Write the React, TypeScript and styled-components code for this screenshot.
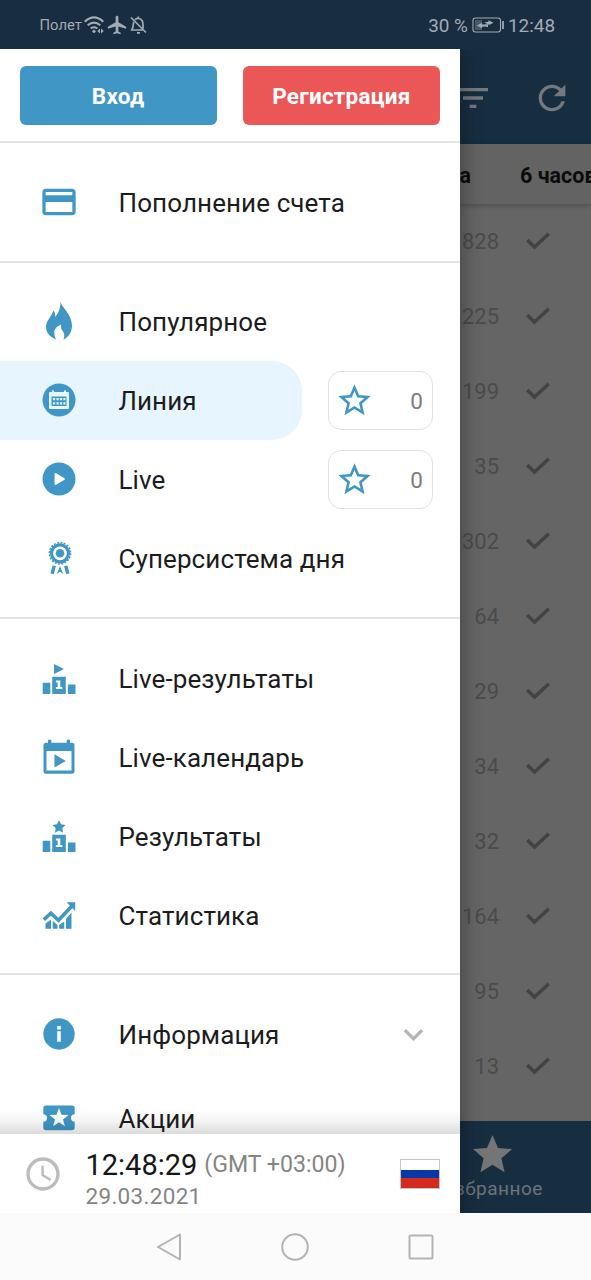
import React from "react";
import styled, { createGlobalStyle } from "styled-components";
import {
  MdAccessTime,
  MdAirplanemodeActive,
  MdCreditCard,
  MdExpandMore,
  MdFilterList,
  MdRefresh,
  MdStar,
  MdStarBorder,
} from "react-icons/md";

const BLUE = "#4097c5";

const GlobalStyle = createGlobalStyle`
  * { box-sizing: border-box; }
  body { margin: 0; background: #fbfbfb; font-family: Roboto, "Liberation Sans", sans-serif; }
  svg { display: block; flex-shrink: 0; }
  button { font-family: inherit; border: 0; padding: 0; }
`;

const Screen = styled.div`
  display: flex;
  flex-direction: column;
  width: 591px;
  height: 1280px;
  overflow: hidden;
`;

const StatusBar = styled.header`
  display: flex;
  justify-content: space-between;
  align-items: center;
  height: 49px;
  flex-shrink: 0;
  padding: 1px 36px 0 39.5px;
  background: #182d41;
  color: #a3abb3;
`;

const StatusGroup = styled.div<{ $size: number; $gap: number }>`
  display: flex;
  align-items: center;
  gap: ${(p) => p.$gap}px;
  font-size: ${(p) => p.$size}px;
  white-space: nowrap;
`;

const Body = styled.div`
  display: flex;
  height: 1164px;
  flex-shrink: 0;
`;

const Drawer = styled.aside`
  z-index: 1;
  display: flex;
  flex-direction: column;
  width: 459.5px;
  flex-shrink: 0;
  background: #fff;
  box-shadow: 3px 0 18px rgba(0, 0, 0, 0.32);
  clip-path: inset(0 -30px 0 0);
`;

const AuthRow = styled.div`
  display: flex;
  gap: 26px;
  height: 94px;
  flex-shrink: 0;
  padding: 17px 19.5px 0;
  border-bottom: 2px solid #e4e4e4;
`;

const AuthButton = styled.button<{ $color: string }>`
  flex: 1;
  height: 59px;
  border-radius: 6px;
  background: ${(p) => p.$color};
  color: #fff;
  font-size: 22.5px;
  font-weight: 700;
  letter-spacing: 0.25px;
  line-height: 60px;
`;

const Menu = styled.nav`
  height: 991px;
  overflow: hidden;
  flex-shrink: 0;
`;

const Section = styled.section`
  padding: 20px 0 18px;
  border-bottom: 2px solid #e4e4e4;
  &:first-child { padding-bottom: 19px; }
  &:nth-child(2) { padding: 19px 0; }
  &:last-child { border-bottom: 0; }
`;

const Item = styled.div<{ $height?: number }>`
  display: flex;
  align-items: center;
  height: ${(p) => p.$height ?? 79}px;
`;

const ItemMain = styled.div<{ $active?: boolean }>`
  display: flex;
  align-items: center;
  width: 302px;
  height: 79px;
  flex-shrink: 0;
  padding: 0 0 1px 39px;
  border-radius: 0 30px 30px 0;
  background: ${(p) => (p.$active ? "#e6f5ff" : "transparent")};
  color: ${BLUE};
`;

const Label = styled.span`
  margin-left: 39.5px;
  padding-top: 2px;
  color: #1c1c1e;
  font-size: 26px;
  letter-spacing: 0.1px;
  line-height: 32px;
  white-space: nowrap;
`;

const FavoriteBox = styled.div`
  display: flex;
  justify-content: space-between;
  align-items: center;
  width: 105px;
  height: 59px;
  margin-left: 26px;
  padding: 0 9px 0 6px;
  border: 1.5px solid #e0e0e0;
  border-radius: 13px;
  color: #7c7c7c;
  font-size: 22.5px;
  svg { color: ${BLUE}; }
`;

const Chevron = styled(MdExpandMore)`
  margin-left: 92px;
  color: #b5b5b5;
`;

const MenuShade = styled.div`
  position: relative;
  height: 24px;
  margin-top: -24px;
  flex-shrink: 0;
  background: linear-gradient(to bottom, rgba(0, 0, 0, 0), rgba(0, 0, 0, 0.05) 50%, rgba(0, 0, 0, 0.14));
`;

const Footer = styled.footer`
  display: flex;
  height: 79px;
  flex-shrink: 0;
  padding: 0 20px 0 22.5px;
  background: #fff;
  svg:first-child { margin-top: 20px; color: #bcbcbc; }
`;

const Clock = styled.div`
  flex: 1;
  margin-left: 23px;
  padding-top: 12px;
  color: #858585;
  font-size: 22.5px;
  white-space: nowrap;
`;

const Time = styled.div`
  display: flex;
  align-items: center;
  gap: 7px;
  height: 37px;
  line-height: 36px;
  font-size: 23.1px;
  strong { color: #161616; font-size: 29px; font-weight: 400; }
`;

const DateLine = styled.div`
  line-height: 26px;
  letter-spacing: 0.3px;
`;

const Flag = styled.div`
  width: 40px;
  height: 30px;
  margin-top: 25px;
  border: 1.5px solid #c4c4c4;
  background: linear-gradient(#fff 0 34%, #0638a8 34% 66%, #d52a1e 66%);
`;

const Page = styled.main`
  display: flex;
  flex-direction: column;
  flex: 1;
  min-width: 0;
  overflow: hidden;
  background: #656565;
`;

const AppBar = styled.div`
  display: flex;
  gap: 39px;
  height: 95px;
  flex-shrink: 0;
  background: #172e41;
  color: #74797d;
  svg { margin-top: 29px; }
  svg:first-child { margin-left: -7px; }
`;

const Tabs = styled.div`
  display: flex;
  gap: 49px;
  height: 60px;
  flex-shrink: 0;
  background: #636363;
  box-shadow: 0 2px 5px rgba(0, 0, 0, 0.22);
  color: #0c0c0c;
  font-size: 21.5px;
  font-weight: 700;
  line-height: 63px;
  white-space: nowrap;
`;

const List = styled.div`
  flex: 1;
  min-height: 0;
`;

const CountRow = styled.div`
  display: flex;
  align-items: center;
  justify-content: flex-end;
  gap: 27px;
  height: 75px;
  padding-right: 41px;
  color: #4b4b4b;
  font-size: 22px;
  svg { margin-bottom: 1px; }
`;

const BottomFill = styled.div`
  background: #172e41;
`;

const BottomTab = styled.div`
  display: flex;
  flex-direction: column;
  align-items: center;
  width: 65px;
  height: 92px;
  padding-top: 10px;
  color: #6d747a;
  font-size: 19px;
  letter-spacing: 0.5px;
  line-height: 22px;
  white-space: nowrap;
  svg { color: #757575; }
`;

const NavBar = styled.div`
  display: flex;
  align-items: center;
  justify-content: center;
  gap: 98px;
  flex: 1;
  padding-right: 2px;
  background: #fbfbfb;
`;

const Icon = ({ children, size = 40 }: { children: React.ReactNode; size?: number }) => (
  <svg width={size} height={size} viewBox="0 0 40 40" fill="currentColor">
    {children}
  </svg>
);

const FlameIcon = () => (
  <Icon>
    <path d="M21.6 0.5c.5 5.500 11.400 12.500 11.400 24.200 0 7-4.200 11.700-8.500 14.100 1.200-3.200 1.100-6.200-.7-8.700-1.400-2-2.500-3.500-1.700-6.600-4.600 2-7.100 4.900-6.800 8.600.1 2.500.7 4.500 1.800 6.500C11.700 36.500 7 32.200 7 26.100 7 19.500 12.700 15.800 14.300 9.500c1.800 2 2.300 4.300 1.800 6.800C19.700 11.800 21.800 6.500 21.600.5z" />
  </Icon>
);

const LineIcon = () => (
  <Icon>
    <circle cx="20" cy="20" r="16.500" />
    <path fill="#e6f5ff" d="M11 12h2v-1.500h2V12h10v-1.500h2V12h2q1 0 1 1v15q0 1-1 1H11q-1 0-1-1V13q0-1 1-1z" />
    <path d="M12.500 16.500h15v9.500h-15z" />
    <path
      fill="#e6f5ff"
      d="M14 18h2.200v2.200H14zm3.500 0h2.200v2.200h-2.200zm3.400 0h2.200v2.200h-2.200zm3.400 0h2.200v2.200h-2.200zM14 22.300h2.200v2.200H14zm3.500 0h2.200v2.200h-2.200zm3.400 0h2.200v2.200h-2.200zm3.400 0h2.200v2.200h-2.200z"
    />
  </Icon>
);

const PlayIcon = () => (
  <Icon>
    <circle cx="20" cy="20" r="16.500" />
    <path fill="#fff" stroke="#fff" strokeWidth="1.500" strokeLinejoin="round" d="M16.300 14.700l8.800 5.300-8.800 5.300z" />
  </Icon>
);

const MedalIcon = () => (
  <Icon>
    <circle cx="21" cy="15.300" r="10.600" fill="none" stroke="currentColor" strokeWidth="1.500" strokeDasharray="2 1.330" />
    <circle cx="21" cy="15.300" r="8.500" fill="none" stroke="currentColor" strokeWidth="3.200" />
    <circle cx="21" cy="15.300" r="4.300" />
    <path d="M13.600 27.500l3.300.4-2 8.100-3.500-.4zm14.800 0l-3.300.4 2 8.100 3.500-.4zM21 28l3.200 8-3.200-2.300-3.200 2.300z" />
  </Icon>
);

const PodiumBase = () => (
  <>
    <path d="M3.700 24.800h7.600V36H3.700zM28.900 26.400h7.600V36h-7.600zM13.200 18.800h13.600V36H13.200z" />
    <path fill="#fff" d="M16.900 22.500h4.400v6.400h2V31h-6.400v-2.100h1.800v-4.300h-1.800z" />
  </>
);

const LivePodiumIcon = () => (
  <Icon>
    <path d="M15 6l10 5-10 5z" />
    <PodiumBase />
  </Icon>
);

const StarPodiumIcon = () => (
  <Icon>
    <path d="M20 4.200l2.100 4.100 4.500.6-3.300 3.200.8 4.600-4.100-2.200-4.100 2.200.8-4.600-3.300-3.200 4.500-.6z" />
    <PodiumBase />
  </Icon>
);

const CalendarIcon = () => (
  <Icon>
    <path
      fillRule="evenodd"
      d="M9 3.200q1.700-1.500 3.300 0V5.700h15.400V3.200q1.600-1.500 3.300 0v2.500h2q2.500 0 2.500 2.500v26q0 2.500-2.500 2.500H7q-2.500 0-2.500-2.500v-26Q4.500 5.700 7 5.700h2zM7.500 14v19.500h25V14z"
    />
    <path d="M15.500 17.200l11.300 6.700-11.300 6.700z" />
  </Icon>
);

const StatsIcon = () => (
  <Icon>
    <path d="M6.500 28.500l5.500-4v9.300H6.500zm7.200-2.800l4.800 4.300v3.800h-4.800zm6.500 4.300l5-3.500v7.300h-5zm6.700-6l5.600-6.500v16.300h-5.600z" />
    <path d="M4.800 24.800l7.100-6.600 7.600 7L33 11" fill="none" stroke="currentColor" strokeWidth="3.600" />
    <path d="M27.500 7.300h8.700V16z" />
  </Icon>
);

const InfoIcon = () => (
  <Icon>
    <circle cx="20" cy="20" r="15.700" />
    <path fill="#fff" d="M18.200 12h3.600v3.500h-3.600zm0 5.300h3.600v10.500h-3.600z" />
  </Icon>
);

const TicketIcon = () => (
  <Icon>
    <path d="M7 7.500h26q2.700 0 2.700 2.700v6a3.700 3.700 0 0 0 0 7.400v6q0 2.700-2.700 2.700H7q-2.700 0-2.700-2.700v-6a3.700 3.700 0 0 0 0-7.400v-6q0-2.700 2.700-2.700z" />
    <path fill="#fff" d="M20 10l2.500 6.800 7 .2-5.500 4.400 1.900 6.800-5.900-4-5.900 4 1.900-6.800-5.500-4.400 7-.2z" />
  </Icon>
);

const WifiIcon = () => (
  <svg width="20" height="18" viewBox="0 0 20 18" fill="none" stroke="currentColor" strokeWidth="2.100">
    <path d="M.7 5.700q9.300-8.500 18.600 0M3.700 9.300q6.300-5.500 12.600 0M6.700 12.500q3.300-2.500 6.600 0" />
    <circle cx="10" cy="15.300" r="1.600" fill="currentColor" stroke="none" />
    <path fill="currentColor" stroke="none" d="M16 12.500v5L13.200 15zM17 12.500v5l2.800-2.500z" />
  </svg>
);

const BellOffIcon = () => (
  <svg width="17" height="18" viewBox="0 0 17 18" fill="none" stroke="currentColor" strokeWidth="1.700">
    <path d="M5 3.700C6.400 2 10.500 1.700 12.300 5c1 2 .4 5 1 7.500M3.800 5.700C3 8 3.600 11 1.800 14h12M1 1.500l15 15M7 16.800h3M8.300 2.500V.5" />
  </svg>
);

const BatteryIcon = () => (
  <svg width="32" height="16" viewBox="0 0 32 16" fill="none" stroke="currentColor">
    <rect x="1" y="1" width="27.500" height="14" rx="2.500" strokeWidth="1.100" />
    <path fill="currentColor" fillOpacity=".35" stroke="none" d="M3 3h7v10H3z" />
    <path fill="currentColor" stroke="none" d="M5 8.500l5-2.800v1.800l6-.3v3l-2.500-.8-3.500.3v1.600zM21.500 5.700l-5-2.500v1.600l-4 .5 3 2 1-.3v1.300z" />
    <path strokeWidth="1.800" d="M31 4v8" />
  </svg>
);

const CheckIcon = () => (
  <svg width="24" height="18" viewBox="0 0 24 18" fill="none" stroke="#434343" strokeWidth="3.500">
    <path d="M1.200 8l7.300 7L22.800 1.800" />
  </svg>
);

type Entry = { label: string; icon: React.ReactNode; active?: boolean; favorites?: number; expandable?: boolean };

const sections: Entry[][] = [
  [{ label: "Пополнение счета", icon: <MdCreditCard size={40} /> }],
  [
    { label: "Популярное", icon: <FlameIcon /> },
    { label: "Линия", icon: <LineIcon />, active: true, favorites: 0 },
    { label: "Live", icon: <PlayIcon />, favorites: 0 },
    { label: "Суперсистема дня", icon: <MedalIcon /> },
  ],
  [
    { label: "Live-результаты", icon: <LivePodiumIcon /> },
    { label: "Live-календарь", icon: <CalendarIcon /> },
    { label: "Результаты", icon: <StarPodiumIcon /> },
    { label: "Статистика", icon: <StatsIcon /> },
  ],
  [
    { label: "Информация", icon: <InfoIcon />, expandable: true },
    { label: "Акции", icon: <TicketIcon /> },
  ],
];

const counts = [828, 225, 199, 35, 302, 64, 29, 34, 32, 164, 95, 13];

export default function App() {
  return (
    <Screen>
      <GlobalStyle />
      <StatusBar>
        <StatusGroup $size={14.8} $gap={2}>
          <span>Полет</span>
          <WifiIcon />
          <MdAirplanemodeActive size={22} />
          <BellOffIcon />
        </StatusGroup>
        <StatusGroup $size={18.9} $gap={4}>
          <span>30 %</span>
          <BatteryIcon />
          <span>12:48</span>
        </StatusGroup>
      </StatusBar>
      <Body>
        <Drawer>
          <AuthRow>
            <AuthButton $color={BLUE}>Вход</AuthButton>
            <AuthButton $color="#eb5757">Регистрация</AuthButton>
          </AuthRow>
          <Menu>
            {sections.map((entries, i) => (
              <Section key={i}>
                {entries.map((e) => (
                  <Item key={e.label} $height={e.label === "Акции" ? 89 : 79}>
                    <ItemMain $active={e.active}>
                      {e.icon}
                      <Label>{e.label}</Label>
                    </ItemMain>
                    {e.favorites !== undefined && (
                      <FavoriteBox>
                        <MdStarBorder size={39} />
                        {e.favorites}
                      </FavoriteBox>
                    )}
                    {e.expandable && <Chevron size={39} />}
                  </Item>
                ))}
              </Section>
            ))}
          </Menu>
          <MenuShade />
          <Footer>
            <MdAccessTime size={40} />
            <Clock>
              <Time>
                <strong>12:48:29</strong>
                <span>(GMT +03:00)</span>
              </Time>
              <DateLine>29.03.2021</DateLine>
            </Clock>
            <Flag />
          </Footer>
        </Drawer>
        <Page>
          <AppBar>
            <MdFilterList size={40} />
            <MdRefresh size={40} />
          </AppBar>
          <Tabs>
            <span>а</span>
            <span>6 часов</span>
          </Tabs>
          <List>
            {counts.map((n) => (
              <CountRow key={n}>
                {n}
                <CheckIcon />
              </CountRow>
            ))}
          </List>
          <BottomFill>
            <BottomTab>
              <MdStar size={47} />
              Избранное
            </BottomTab>
          </BottomFill>
        </Page>
      </Body>
      <NavBar>
        <svg width="28" height="28" viewBox="0 0 28 28" fill="none" stroke="#b3b3b3" strokeWidth="2" strokeLinejoin="round">
          <path d="M25 1.500v25L3 14z" />
        </svg>
        <svg width="28" height="28" viewBox="0 0 28 28" fill="none" stroke="#b3b3b3" strokeWidth="2">
          <circle cx="14" cy="14" r="12.800" />
        </svg>
        <svg width="28" height="28" viewBox="0 0 28 28" fill="none" stroke="#b3b3b3" strokeWidth="2">
          <rect x="2.500" y="2.500" width="23" height="23" rx="1" />
        </svg>
      </NavBar>
    </Screen>
  );
}
